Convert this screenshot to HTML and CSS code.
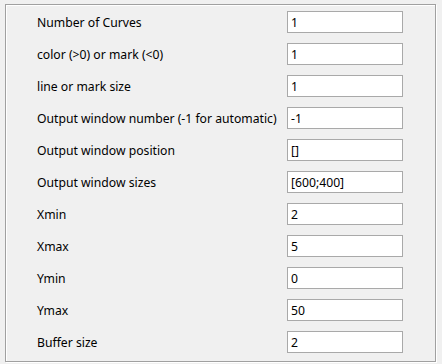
FILE: index.html
```html
<!DOCTYPE html>
<html lang="en">
<head>
  <meta charset="UTF-8">
  <title>Plot parameters</title>
  <link rel="stylesheet" href="styles.css">
</head>
<body>
  <div class="panel">
    <form class="params">
      <label for="p1">Number of Curves</label>
      <input type="text" id="p1" value="1" />
      <label for="p2">color (&gt;0) or mark (&lt;0)</label>
      <input type="text" id="p2" value="1" />
      <label for="p3">line or mark size</label>
      <input type="text" id="p3" value="1" />
      <label for="p4">Output window number (-1 for automatic)</label>
      <input type="text" id="p4" value="-1" />
      <label for="p5">Output window position</label>
      <input type="text" id="p5" value="[]" />
      <label for="p6">Output window sizes</label>
      <input type="text" id="p6" value="[600;400]" />
      <label for="p7">Xmin</label>
      <input type="text" id="p7" value="2" />
      <label for="p8">Xmax</label>
      <input type="text" id="p8" value="5" />
      <label for="p9">Ymin</label>
      <input type="text" id="p9" value="0" />
      <label for="p10">Ymax</label>
      <input type="text" id="p10" value="50" />
      <label for="p11">Buffer size</label>
      <input type="text" id="p11" value="2" />
    </form>
  </div>
</body>
</html>
```
FILE: styles.css
```css
body {
  margin: 0;
  padding: 4px 6px 3px 5px;
  background: #f0f0f0;
  font-family: Tahoma, "Noto Sans", sans-serif;
  font-size: 12.2px;
  color: #000;
}
.panel {
  border: 1px solid #a0a0a0;
  box-shadow: inset 1px 1px 0 #fff, 1px 1px 0 #fff;
  box-sizing: border-box;
  height: 358px;
}
.params {
  display: grid;
  grid-template-columns: 250px 116px;
  grid-auto-rows: 22px;
  row-gap: 10px;
  align-items: center;
  padding: 6px 0 0 31px;
  margin: 0;
}
.params label {
  white-space: nowrap;
}
.params input {
  box-sizing: border-box;
  width: 116px;
  height: 22px;
  margin: 0;
  padding: 0 3px;
  border: 1px solid #a9a9a9;
  background: #fff;
  font: inherit;
  color: #000;
  outline: none;
}
```
